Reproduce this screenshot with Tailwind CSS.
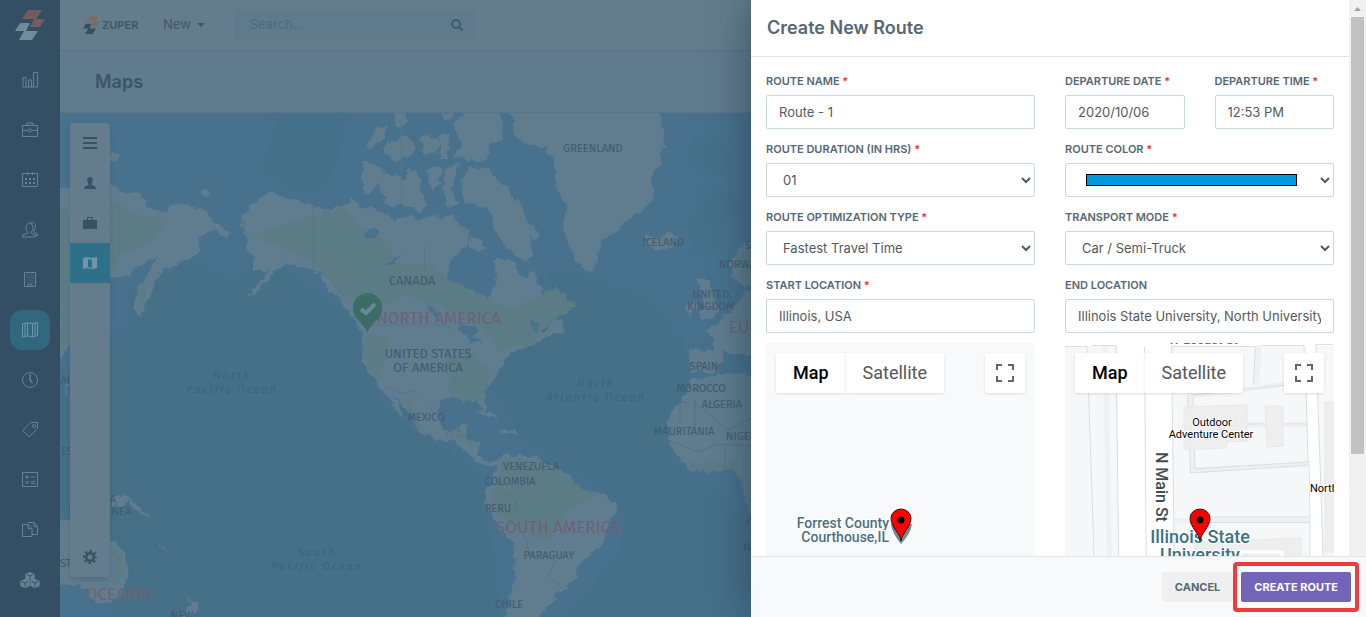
<!DOCTYPE html>
<html lang="en">
  <head>
    <meta charset="UTF-8" />
    <meta name="viewport" content="width=device-width, initial-scale=1.0" />
    <title>Maps - Create New Route</title>
    <script src="https://cdn.jsdelivr.net/npm/@tailwindcss/browser@4"></script>
  </head>
  <body class="relative flex h-screen overflow-hidden bg-[#647c8b] font-['Inter',sans-serif] text-[#5a6872]">

    <!-- Shared icons -->
    <svg class="hidden">
      <defs>
        <g id="pin">
          <path d="M0 32C-1 24-10 18-10 9.500A10 9.500 0 0 1 10 9.500C10 18 1 24 0 32Z" fill="#f00" stroke="#3b0d0d" stroke-width="1" />
          <circle cy="11" r="3.500" fill="#000" />
        </g>
        <g id="corners" fill="none" stroke="#666" stroke-width="2">
          <path d="M1 6V1h5M12 1h5v5M17 12v5h-5M6 17H1v-5" />
        </g>
      </defs>
    </svg>

    <!-- Sidebar -->
    <nav class="flex w-15 shrink-0 flex-col items-center gap-2.5 bg-[#344f63] text-[#668396]">
      <a href="#" aria-label="Zuper" class="flex h-[50px] items-center">
        <svg width="30" height="30" viewBox="0 0 30 30">
          <path d="M13 0h14l-6 9H7Z" fill="#755a5e" />
          <path d="M19 9h11l-5 8H15Z" fill="#755a5e" />
          <path d="M5 13h10l-4 8H0Z" fill="#708c9c" />
          <path d="M9 21h14l-6 9H4Z" fill="#708c9c" />
        </svg>
      </a>
      <a href="#" aria-label="Dashboard" class="flex size-10 items-center justify-center">
        <svg width="16" height="16" viewBox="0 0 16 16" fill="none" stroke="currentColor"><path d="M1 15V5.500h3V15M6.500 15V8h3v7M11.500 15V.5h4V15M.5 15H16" /></svg>
      </a>
      <a href="#" aria-label="Jobs" class="flex size-10 items-center justify-center">
        <svg width="16" height="16" viewBox="0 0 16 16" fill="none" stroke="currentColor"><path d="M.5 3.500h15v11H.5ZM5 3V1h6v2M.5 8.500H6M10 8.500h5.500" /><circle cx="8" cy="8.500" r="1.500" /></svg>
      </a>
      <a href="#" aria-label="Calendar" class="flex size-10 items-center justify-center">
        <svg width="16" height="16" viewBox="0 0 16 16" fill="none" stroke="currentColor"><path d="M.5 1.500h15v13H.5ZM5.500 0v3M10.500 0v3" /><path d="M3 7h10M3 11h10" stroke-width="2" stroke-dasharray="2" /></svg>
      </a>
      <a href="#" aria-label="Customers" class="flex size-10 items-center justify-center">
        <svg width="16" height="16" viewBox="0 0 16 16" fill="none" stroke="currentColor"><path d="M4 6a3.500 4.500 0 0 1 7 0q0 3-2 4v1l4 2v2H.5v-2L6 11v-1Q4 9 4 6ZM8 1q5-2 5.500 3 0 3-1.500 4v2l3.500 2v1.500H13" /></svg>
      </a>
      <a href="#" aria-label="Organizations" class="flex size-10 items-center justify-center">
        <svg width="16" height="16" viewBox="0 0 16 16" fill="none" stroke="currentColor"><path d="M2.500.5h11v14h-11Z" /><path d="M4.500 3h7M4.500 5.500h7M4.500 8h7M4.500 10.500h7" stroke-dasharray="1 1" /><path d="M6 15v-2.500h4V15" /></svg>
      </a>
      <a href="#" aria-label="Maps" aria-current="page" class="flex size-10 items-center justify-center rounded-xl bg-[#316880] text-[#7195a8]">
        <svg width="16" height="16" viewBox="0 0 16 16" fill="none" stroke="currentColor"><path d="M.5 1.500 5.500 1l5 .5 5-1v13l-5 1.500-5-1-5 1ZM5.500 1v13M10.500 1.500V15M3 1.500V14M13 1v13" /></svg>
      </a>
      <a href="#" aria-label="Timesheets" class="flex size-10 items-center justify-center">
        <svg width="16" height="16" viewBox="0 0 16 16" fill="none" stroke="currentColor"><circle cx="8" cy="8" r="7.500" /><path d="M8 2v6l2.500 3" stroke-width="1.500" /></svg>
      </a>
      <a href="#" aria-label="Products" class="flex size-10 items-center justify-center">
        <svg width="16" height="16" viewBox="0 0 16 16" fill="none" stroke="currentColor"><path d="M.8 8.500 8.500.5h7v6L7 15Z" /><circle cx="12" cy="4" r="1.500" /></svg>
      </a>
      <a href="#" aria-label="Quotes" class="flex size-10 items-center justify-center">
        <svg width="16" height="16" viewBox="0 0 16 16" fill="none" stroke="currentColor"><path d="M.5.5h15v14H.5ZM3 5h4M5 3v4M9 5h4M3.500 9l3 3M6.500 9l-3 3M9 9.500h4M9 11.500h4" /></svg>
      </a>
      <a href="#" aria-label="Documents" class="flex size-10 items-center justify-center">
        <svg width="16" height="16" viewBox="0 0 16 16" fill="none" stroke="currentColor"><path d="M.5 2.500H6l4 4v8H.5ZM6 2.500v4h4M6 1V.5h6l3.500 4v8H10M12 .5v4h3.500" /></svg>
      </a>
      <a href="#" aria-label="Inventory" class="flex size-10 items-center justify-center">
        <svg width="20" height="16" viewBox="0 0 20 16" fill="currentColor"><path d="m10 0 4.700 2v5L10 9 5.300 7V2ZM5 7l4.700 2v5L5 16 .3 14V9ZM15 7l4.700 2v5L15 16l-4.700-2V9Z" /><path d="m6.500 2.500 3.500 1.500 3.500-1.500M10 4v4M1.500 9.500 5 11l3.500-1.500M5 11v4M11.500 9.500 15 11l3.500-1.500M15 11v4" fill="none" stroke="#344f63" /></svg>
      </a>
    </nav>

    <main class="flex min-w-0 flex-1 flex-col">
      <!-- Top bar -->
      <header class="flex h-[51px] shrink-0 items-center border-b border-[#587384] pl-[23px] text-[#3e5b6c]">
        <a href="#" class="flex w-[80px] items-center gap-0.5">
          <svg width="17" height="18" viewBox="0 0 30 30" preserveAspectRatio="none">
            <path d="M13 0h14l-6 9H7ZM19 9h11l-5 8H15Z" fill="#7c6a67" />
            <path d="M5 13h10l-4 8H0ZM9 21h14l-6 9H4Z" fill="#34505f" />
          </svg>
          <span class="text-[11px] font-bold">ZUPER</span>
        </a>
        <button class="flex items-center gap-1.5 text-[13px]">New
          <svg width="8" height="4" viewBox="0 0 8 4" fill="currentColor"><path d="M0 0h8L4 4Z" /></svg>
        </button>
        <div class="ml-[30px] flex h-[30px] w-60 items-center bg-[#5e7a8b] pr-3 pl-[15px]">
          <input type="text" aria-label="Search" placeholder="Search.." class="min-w-0 flex-1 text-[13px] outline-none placeholder:text-[#4d6b7b]" />
          <svg width="12" height="12" viewBox="0 0 12 12" fill="none" stroke="currentColor" stroke-width="2"><circle cx="5" cy="5" r="4" /><path d="m8 8 3.500 3.500" /></svg>
        </div>
      </header>

      <div class="flex h-[62px] shrink-0 items-center border-b border-[#5a7484] bg-[#607b8b] pl-[35px]">
        <h1 class="text-lg font-semibold text-[#3a5566]">Maps</h1>
      </div>

      <!-- World map -->
      <section class="relative min-h-0 flex-1 overflow-hidden bg-[#47718c]">
        <svg class="size-full" viewBox="60 113 1306 504" preserveAspectRatio="xMinYMin slice">
          <defs>
            <filter id="coast" x="0" y="0" width="1" height="1">
              <feTurbulence type="fractalNoise" baseFrequency=".12" numOctaves="3" seed="4" />
              <feDisplacementMap in="SourceGraphic" scale="9" xChannelSelector="R" yChannelSelector="G" />
            </filter>
            <filter id="depth"><feGaussianBlur stdDeviation="4" /></filter>
          </defs>
          <!-- deeper water -->
          <g fill="#446f88" filter="url(#depth)">
            <path d="M280 118h60l-2 40-20 30-28 2-26-22Z" />
            <path d="M130 290l60-30 40 20 50-15 80 60 20 80 100 70 20 150H130l-70-60V370l70-40Z" />
            <path d="M550 270l40 10 60 20 30 40 10 60-30 40 30 40 60 40v107H560l60-70 10-50-60-40-50-30-30-60 60-60Z" />
            <path d="M690 160l25-20 20 20-10 12ZM700 200l30-10 20 20-33 10-4 20-15 8Z" />
          </g>
          <g filter="url(#coast)">
            <rect x="60" y="113" width="1306" height="504" fill="none" />
            <g fill="#617c8f">
              <!-- Asia and Oceania -->
              <path d="M40 192L68 188 110 183 125 193 140 195 147 207 155 208 165 212 175 203 190 205 205 210 215 222 225 230 232 234 226 238 212 228 205 233 198 240 201 250 195 256 175 266 165 268 158 278 148 300 140 317 136 312 134 298 138 288 152 266 157 257 148 262 135 268 130 276 110 276 95 290 75 300 70 345 60 358 40 360Z" />
              <path d="M200 192l7-3 5 4-6 4ZM110 151l6 3 5 3-6 4-5-2ZM240 217l10-5v30l-7-8 3-8ZM64 380l5 4-3 10ZM112 497l12-3 6 5-8 6-10 2ZM130 500l9 7 12 10-6-2-14-9ZM156 542l12 10-4-1Z" />
              <path d="M40 522L70 520 85 530 105 545 115 542 125 555 128 575 122 592 110 605 98 604 85 588 72 584 40 586ZM184 591l8 12 7 2-7 12h-8l6-12Z" />
              <!-- North America -->
              <path d="M248 208L258 200 270 193 282 196 305 202 315 205 325 211 340 206 352 200 360 208 375 208 387 216 396 220 410 216 420 220 435 215 443 222 452 213 460 225 470 230 468 246 455 255 448 268 447 278 452 286 465 293 478 300 484 312 489 310 487 295 495 288 497 275 493 262 500 258 515 263 520 278 528 280 533 270 540 288 555 302 557 312 548 318 527 321 532 330 545 332 553 320 562 322 566 330 548 337 535 345 518 350 505 358 496 376 484 394 487 408 485 412 478 402 475 397 463 397 452 399 442 399 438 410 442 428 450 433 458 430 460 424 468 424 466 440 478 442 478 455 485 461 500 460 492 466 484 465 475 460 462 447 452 440 440 441 425 437 416 428 412 415 400 402 391 392 397 402 405 420 396 412 388 395 378 385 368 372 362 360 363 345 360 328 350 315 340 300 330 290 320 276 312 270 300 268 285 264 272 275 260 289 246 300 258 284 268 272 252 272 256 256 244 250 248 238 240 226Z" />
              <path d="M366 145L375 130 387 126 385 138 372 148ZM383 152L386 141 396 141 403 134 416 146 410 155 396 162ZM361 162L372 161 382 170 389 176 378 184 373 192 365 195ZM378 190L384 177 396 175 405 180 408 169 418 170 420 188 427 204 420 213 405 205 390 207ZM425 170l15-3 2 18-10 6ZM444 168l14-3-3 16-4 12 8 10-10 5-6-20ZM418 138l10-2 12 2-4 16-12-2ZM440 134l10 2-2 22-8 2Z" />
              <path d="M452 126L466 112 500 108 505 140 490 142 488 160 470 162 455 156 462 142ZM396 112l8-2 2 14-8 4ZM440 112l16 0-8 10Z" />
              <path d="M460 180L472 168 488 170 500 181 512 195 522 205 527 222 541 230 535 240 528 236 532 250 530 264 515 255 503 244 495 230 492 214 480 205 465 203ZM470 236l10 4 6 10-10 0-6-3ZM475 412l10-2 14 6-10 0ZM500 430l16 1 2 4-16-2Z" />
              <!-- Greenland, Iceland -->
              <path d="M506 106L514 122 511 130 518 140 528 144 545 147 553 160 557 190 568 210 563 225 568 245 575 260 582 268 592 272 598 258 602 240 615 234 625 220 640 213 654 200 652 180 660 165 664 140 658 106ZM647 233l9 4 14-5 9 6-9 9-14 4-8-8Z" />
              <!-- South America -->
              <path d="M494 464L505 453 515 456 530 456 545 462 560 470 572 478 576 487 590 492 605 497 616 503 617 510 608 527 602 545 592 553 580 563 576 577 565 591 555 592 553 603 545 608 536 620 505 620 511 595 516 570 514 545 500 530 493 515 486 500 486 490 492 483 496 470Z" />
              <!-- Europe and Africa -->
              <path d="M695 278L708 278 713 296 719 310 712 318 699 319 704 302ZM686 306l9-6 3 12-10 4ZM730 262L741 245 780 236V286L738 284 731 277ZM704 328L716 325 727 313 738 302 745 290 790 296V357L722 352 724 360 712 373 690 372 689 349 712 350 714 338Z" />
              <path d="M700 378L720 374 740 373 790 386V560H758L751 520 751 500 742 488 741 474 733 468 712 472 694 473 682 464 674 452 667 440 668 420 676 404 687 394 691 380Z" />
            </g>
            <!-- forests -->
            <g fill="#5c7b85">
              <path d="M110 200l30 15 20 10-6 18-30 10-14 18ZM150 215l12-4 2 18-10 4ZM60 210l10 0v130l-10 10ZM138 290l10-8-6 26Z" />
              <path d="M256 235l40-15 50-12 14 20 20 10 20 26 30 0 20 16 30 14 30 14 20-6 25-15 20 20-26 16-20 20-30 8-20-26-40-20-36-10-30 14-20-8-30-30-30-20-50-16ZM365 335l20 0 5 20-16 22-10-20ZM445 360l30-10 16 26-10 26-30-4ZM400 390l10 14 14 26-8-2ZM440 436l24-4 10 14-18-8ZM460 426l8-2 0 8Z" />
              <path d="M505 458l50 12 18 14 24 10-26 14-24 36-20-10-30-18-6-24 8-20ZM680 454l14 8 36-2 10 6-20 4-28 2ZM742 482h20v30h-12ZM738 250l13-2v30l-10-4ZM112 548l12 10 0 20-10 6Z" />
            </g>
            <!-- lakes -->
            <g fill="#47718c">
              <path d="M362 235l14-8 4 6-14 6ZM384 264l18-10-12 12ZM426 305l10 4 4 12-8-8ZM458 328l14-4 8 8-6 4 8 10-10-6ZM530 322l12 4-6 6Z" />
            </g>
          </g>
          <g fill="none" stroke="#557182" stroke-width="1">
            <path d="M313.500 206v64l12 4 20 24" />
            <path d="M500 490l16 10 0 10-10 4M516 524l10 14 4 20M690 402h-10v20M695 400l0 30M694 402l34 28 24-12M668 440l30 12 20-8 34 2M725 445v24M556 560l-8 16 14 12" />
          </g>
          <g fill="none" stroke="#5a7586" stroke-width="1">
            <path d="M372 325.500h72l12 4M384 387l16 6 12-2 20 18M401.500 115v88M424.500 245v28" />
          </g>
          <g class="font-['Fira_Sans','Noto_Sans',sans-serif] text-[11px]" fill="#3f5b70" text-anchor="middle">
            <text x="593" y="152">GREENLAND</text>
            <text x="663" y="246">ICELAND</text>
            <text x="719" y="268" text-anchor="start">NORWAY</text>
            <text x="745" y="249" text-anchor="start">SWEDEN</text>
            <text x="711" y="298">UNITED</text>
            <text x="711" y="310">KINGDOM</text>
            <text x="704" y="370">SPAIN</text>
            <text x="701" y="392">MOROCCO</text>
            <text x="722" y="408">ALGERIA</text>
            <text x="684" y="435">MAURITANIA</text>
            <text x="726" y="440" text-anchor="start">NIGER</text>
            <text x="747" y="524" text-anchor="start">ANGOLA</text>
            <text x="743" y="551" text-anchor="start">NAMIBIA</text>
            <text x="531" y="470">VENEZUELA</text>
            <text x="510" y="485">COLOMBIA</text>
            <text x="498" y="512">PERU</text>
            <text x="549" y="559">PARAGUAY</text>
            <text x="509" y="608">CHILE</text>
            <text x="426" y="421">MEXICO</text>
            <text x="412" y="285" class="text-[13px]">CANADA</text>
            <text x="428" y="358" class="text-[13px]">UNITED STATES</text>
            <text x="428" y="372" class="text-[13px]">OF AMERICA</text>
            <text x="116" y="503" text-anchor="end">PAPUA</text>
            <text x="131" y="515" text-anchor="end">NEW GUINEA</text>
            <text x="70" y="384" text-anchor="end">THAI</text>
            <text x="61" y="455" text-anchor="start">ES</text>
            <text x="60" y="567" text-anchor="start">ST</text>
            <text x="182" y="619">NEW</text>
          </g>
          <g class="font-['Fira_Sans','Noto_Sans',sans-serif] text-[17px]" fill="#6d6276">
            <text x="501" y="324" text-anchor="end">NORTH AMERICA</text>
            <text x="558" y="533" text-anchor="middle">SOUTH AMERICA</text>
            <text x="729" y="333">EUROPE</text>
            <text x="119" y="600" text-anchor="middle">OCEANIA</text>
          </g>
          <g class="font-['Fira_Sans','Noto_Sans',sans-serif] text-[11px] tracking-[2px] italic" fill="#346588" text-anchor="middle">
            <text x="232" y="379">North</text>
            <text x="232" y="393">Pacific Ocean</text>
            <text x="596" y="387">North</text>
            <text x="596" y="401">Atlantic Ocean</text>
            <text x="317" y="556">South</text>
            <text x="317" y="570">Pacific Ocean</text>
          </g>
          <path d="M367.500 333c-3-10-14.500-13-14.500-25.500a14.500 14.500 0 0 1 29 0c0 12.500-11.500 15.500-14.500 25.500Z" fill="#3c6c65" />
          <path d="m361 309 5 4 9-9" fill="none" stroke="#68899a" stroke-width="4" />
        </svg>

        <!-- Map tools float over the map -->
        <div class="absolute top-2.5 bottom-10 left-2.5 flex w-10 flex-col overflow-hidden rounded bg-[#647c8b] text-[#385264] shadow-md">
          <button aria-label="Menu" class="flex h-10 items-center justify-center">
            <svg width="14" height="12" viewBox="0 0 14 12" fill="currentColor"><path d="M0 0h14v2H0ZM0 5h14v2H0ZM0 10h14v2H0Z" /></svg>
          </button>
          <button aria-label="People" class="flex h-10 items-center justify-center">
            <svg width="12" height="12" viewBox="0 0 12 12" fill="currentColor"><path d="M6 0c4 0 3 5 1.500 7v1Q12 9 12 12H0Q0 9 4.500 8V7C3 5 2 0 6 0Z" /></svg>
          </button>
          <button aria-label="Jobs" class="flex h-10 items-center justify-center">
            <svg width="14" height="12" viewBox="0 0 14 12" fill="currentColor"><path d="M0 3h4V0h6v3h4v9H0ZM5 1v2h4V1Z" fill-rule="evenodd" /></svg>
          </button>
          <button aria-label="Routes" class="flex h-10 items-center justify-center bg-[#2e7089] text-[#7296a8]">
            <svg width="14" height="12" viewBox="0 0 14 12" fill="currentColor"><path d="m0 1 4-1 5 1 5-1v11l-5 1-5-1-4 1ZM5 2v8l4 1V3Z" fill-rule="evenodd" /></svg>
          </button>
          <button aria-label="Settings" class="mt-auto flex h-10 items-center justify-center">
            <svg width="14" height="14" viewBox="0 0 14 14" fill="none" stroke="currentColor"><circle cx="7" cy="7" r="3.800" stroke-width="2.600" /><circle cx="7" cy="7" r="6" stroke-width="2" stroke-dasharray="2.400 2.312" stroke-dashoffset="1.200" /></svg>
          </button>
        </div>
      </section>
    </main>

    <!-- Route drawer -->
    <aside class="absolute inset-y-0 right-0 flex w-[615px] flex-col bg-white shadow-[0_0_40px_rgba(30,50,70,0.6)]">
      <div class="flex min-h-0 flex-1">
        <form id="routeForm" class="flex min-w-0 flex-1 flex-col">
          <div class="flex h-[57px] shrink-0 items-center border-b border-[#e2e5e8] px-4">
            <h2 class="text-lg font-semibold text-[#566873]">Create New Route</h2>
          </div>

          <div class="grid min-h-0 flex-1 auto-rows-min grid-cols-2 gap-x-[30px] gap-y-3 overflow-hidden px-[15px] pt-4 text-[13px] text-[#55595c]">
            <div>
              <label for="name" class="mb-1.5 block text-[11px] leading-4 font-semibold text-[#566873]">ROUTE NAME <span class="text-red-500">*</span></label>
              <input id="name" type="text" value="Route - 1" class="h-[34px] w-full rounded-xs border border-[#c9d8de] px-3" />
            </div>
            <div class="grid grid-cols-2 gap-x-[30px]">
              <div>
                <label for="date" class="mb-1.5 block text-[11px] leading-4 font-semibold whitespace-nowrap text-[#566873]">DEPARTURE DATE <span class="text-red-500">*</span></label>
                <input id="date" type="text" value="2020/10/06" class="h-[34px] w-full rounded-xs border border-[#c9d8de] px-3" />
              </div>
              <div>
                <label for="time" class="mb-1.5 block text-[11px] leading-4 font-semibold whitespace-nowrap text-[#566873]">DEPARTURE TIME <span class="text-red-500">*</span></label>
                <input id="time" type="text" value="12:53 PM" class="h-[34px] w-full rounded-xs border border-[#c9d8de] px-3" />
              </div>
            </div>
            <div>
              <label for="duration" class="mb-1.5 block text-[11px] leading-4 font-semibold text-[#566873]">ROUTE DURATION (IN HRS) <span class="text-red-500">*</span></label>
              <select id="duration" class="h-[34px] w-full rounded-xs border border-[#c9d8de] bg-white pl-3">
                <option>01</option>
                <option>02</option>
              </select>
            </div>
            <div>
              <label for="color" class="mb-1.5 block text-[11px] leading-4 font-semibold text-[#566873]">ROUTE COLOR <span class="text-red-500">*</span></label>
              <div class="relative">
                <select id="color" class="h-[34px] w-full rounded-xs border border-[#c9d8de] bg-white pl-3">
                  <option value="#0099dd" aria-label="Blue"></option>
                </select>
                <span class="pointer-events-none absolute top-[11px] right-[37px] left-[21px] h-3 border border-black bg-[#0099dd]"></span>
              </div>
            </div>
            <div>
              <label for="optimization" class="mb-1.5 block text-[11px] leading-4 font-semibold text-[#566873]">ROUTE OPTIMIZATION TYPE <span class="text-red-500">*</span></label>
              <select id="optimization" class="h-[34px] w-full rounded-xs border border-[#c9d8de] bg-white pl-3">
                <option>Fastest Travel Time</option>
              </select>
            </div>
            <div>
              <label for="transport" class="mb-1.5 block text-[11px] leading-4 font-semibold text-[#566873]">TRANSPORT MODE <span class="text-red-500">*</span></label>
              <select id="transport" class="h-[34px] w-full rounded-xs border border-[#c9d8de] bg-white pl-3">
                <option>Car / Semi-Truck</option>
              </select>
            </div>
            <div>
              <label for="start" class="mb-1.5 block text-[11px] leading-4 font-semibold text-[#566873]">START LOCATION <span class="text-red-500">*</span></label>
              <input id="start" type="text" value="Illinois, USA" class="h-[34px] w-full rounded-xs border border-[#c9d8de] px-3" />

              <div class="relative mt-2.5 h-60 overflow-hidden bg-[#f8f9fb] font-['Roboto',sans-serif]">
                <svg class="size-full" viewBox="766 343 269 240" preserveAspectRatio="xMinYMin slice">
                  <path d="M891 524h21q-1 9-11 20-9-11-10-20Z" fill="#6c8e97" />
                  <use href="#pin" x="901" y="509" />
                  <g class="text-sm font-medium" fill="#4d707c" stroke="#fff" stroke-width="2" paint-order="stroke" text-anchor="end">
                    <text x="889" y="528">Forrest County</text>
                    <text x="889" y="542">Courthouse,IL</text>
                  </g>
                </svg>
                <div class="absolute inset-x-2.5 top-2.5 flex h-10 items-stretch text-lg">
                  <button type="button" class="rounded-l-xs bg-white px-[17px] font-medium text-black shadow">Map</button>
                  <button type="button" class="rounded-r-xs bg-white px-[17px] text-[#565656] shadow">Satellite</button>
                  <button type="button" aria-label="Full screen" class="ml-auto flex w-10 items-center justify-center rounded-xs bg-white shadow">
                    <svg width="18" height="18"><use href="#corners" /></svg>
                  </button>
                </div>
              </div>
            </div>
            <div>
              <label for="end" class="mb-1.5 block text-[11px] leading-4 font-semibold text-[#566873]">END LOCATION</label>
              <input id="end" type="text" value="Illinois State University, North University Street, Normal, IL, USA" class="h-[34px] w-full rounded-xs border border-[#c9d8de] px-3" />

              <div class="relative mt-2.5 h-60 overflow-hidden bg-[#f5f7f9] font-['Roboto',sans-serif]">
                <svg class="size-full" viewBox="1065 343 269 240" preserveAspectRatio="xMinYMin slice">
                  <!-- streets -->
                  <path d="M1117 343h55l2 240h-41L1119 583ZM1065 343h269v3h-269ZM1306 345h11l6 238h-13Z" fill="#fff" />
                  <g fill="none" stroke="#eef1f3" stroke-width="5">
                    <path d="M1105 345l5 238M1259 345l-2 40M1190 395l2 75 118-6M1190 396l60-7 36-5M1193 425h115M1175 521l136-1" />
                  </g>
                  <g fill="none" stroke="#d9dee2" stroke-width="1">
                    <path d="M1065 346.500h22l8 236M1092 345.500h24l3 237M1144.500 347l2 236M1171.500 346.500h84l-2 38M1262 345.500h42v18M1171.500 346l3 236M1333 344.500h-17l8 238" />
                    <path d="M1193 395l113-12 1 40M1187.500 395l3 78 118-8M1193 397l2 72 113-7-1-38h-108M1309 466l1 51h-100M1210 522.500h100v60" />
                  </g>
                  <path d="M1184 407l63-2v36l-20 1-1 6-42 2ZM1265 406h18v40l-16 1ZM1195 542l106-4v20h-106ZM1325 402h9v150h-9Z" fill="#eee" stroke="#e6e8e9" />
                  <path d="M1240 552h42v10h-42Z" fill="none" stroke="#fff" stroke-width="3" />
                  <text x="1203" y="344" text-anchor="middle" class="text-[13px] font-medium" fill="#50757f">W Locust St</text>
                  <g class="text-[11px]" fill="#000" stroke="#fff" stroke-width="2" paint-order="stroke" text-anchor="middle">
                    <text x="1212" y="426">Outdoor</text>
                    <text x="1211" y="438">Adventure Center</text>
                    <text x="1310" y="492" text-anchor="start">North Gym</text>
                  </g>
                  <text transform="translate(1156 452) rotate(90)" class="text-base font-medium" fill="#3f4c52">N Main St</text>
                  <g class="text-lg font-medium" fill="#3a7580" stroke="#fff" stroke-width="2" paint-order="stroke" text-anchor="middle">
                    <text x="1200" y="543">Illinois State</text>
                    <text x="1200" y="561">University</text>
                  </g>
                  <use href="#pin" x="1200" y="509" />
                </svg>
                <div class="absolute inset-x-2.5 top-2.5 flex h-10 items-stretch text-lg">
                  <button type="button" class="rounded-l-xs bg-white px-[17px] font-medium text-black shadow">Map</button>
                  <button type="button" class="rounded-r-xs bg-white px-[17px] text-[#565656] shadow">Satellite</button>
                  <button type="button" aria-label="Full screen" class="ml-auto flex w-10 items-center justify-center rounded-xs bg-white shadow">
                    <svg width="18" height="18"><use href="#corners" /></svg>
                  </button>
                </div>
              </div>
            </div>
          </div>
        </form>

        <!-- Scrollbar -->
        <div class="flex w-[17px] shrink-0 flex-col items-center bg-[#f1f1f1]">
          <svg width="7" height="17" viewBox="0 0 7 17" fill="#a3a3a3"><path d="M0 11h7L3.500 7Z" /></svg>
          <div class="h-[437px] w-[13px] bg-[#c1c1c1]"></div>
        </div>
      </div>

      <footer class="flex h-[61px] shrink-0 items-center justify-end gap-2 border-t border-[#e2e5e8] bg-[#f8f9fb] pr-[15px] text-[11px] font-bold">
        <button class="h-[30px] rounded-xs bg-[#efefef] px-[13px] text-[#566873]">CANCEL</button>
        <div class="relative">
          <button type="submit" form="routeForm" class="h-[30px] rounded-xs bg-[#7464b8] px-[13px] text-white">CREATE ROUTE</button>
          <span class="pointer-events-none absolute -inset-x-2 -inset-y-2.5 rounded border-4 border-[#ef3b3e]"></span>
        </div>
      </footer>
    </aside>
  </body>
</html>
